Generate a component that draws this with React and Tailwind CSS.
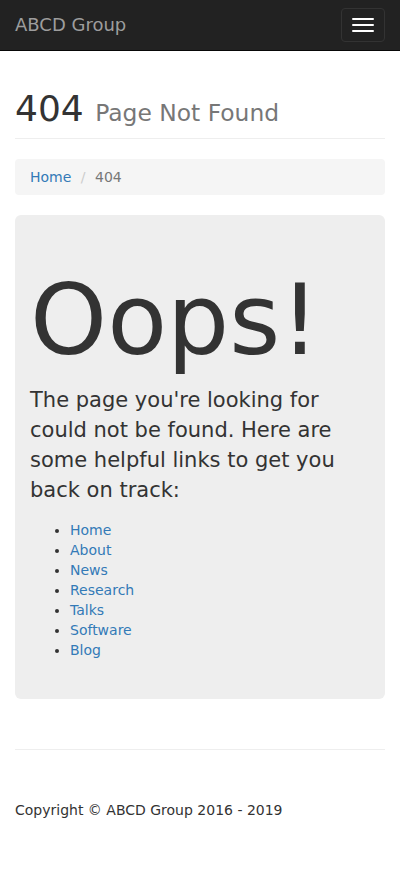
export default function App() {
  const links = ["Home", "About", "News", "Research", "Talks", "Software", "Blog"];

  return (
    <div className="min-h-[881px] bg-white text-[14px] leading-[20px] text-[#333]" style={{ fontFamily: '"DejaVu Sans", sans-serif' }}>
      {/* navbar */}
      <nav className="flex h-[51px] items-start justify-between border-b border-[#080808] bg-[#222]">
        <a className="px-[15px] py-[15px] text-[18px] leading-[20px] text-[#9d9d9d]">ABCD Group</a>
        <button className="mr-[15px] mt-[8px] flex flex-col gap-[4px] rounded-[4px] border border-[#333] px-[10px] py-[9px]">
          <span className="block h-[2px] w-[22px] rounded-[1px] bg-white" />
          <span className="block h-[2px] w-[22px] rounded-[1px] bg-white" />
          <span className="block h-[2px] w-[22px] rounded-[1px] bg-white" />
        </button>
      </nav>

      <div className="px-[15px]">
        <h1 className="mt-[38px] mb-[20px] border-b border-[#eee] pb-[9px] text-[36px] leading-[1.1] font-normal">
          404 <small className="text-[23.4px] text-[#777]">Page Not Found</small>
        </h1>

        <ol className="mb-[20px] flex rounded-[4px] bg-[#f5f5f5] px-[15px] py-[8px]">
          <li><a className="text-[#337ab7]">Home</a>&nbsp;</li>
          <li className="text-[#777]">
            <span className="px-[5px] text-[#ccc]">/&nbsp;</span>404
          </li>
        </ol>

        <div className="mb-[50px] rounded-[6px] bg-[#eee] px-[15px] pt-[30px] pb-[29px]">
          <h1 className="mt-[22px] mb-[11px] text-[98px] leading-[1.1] font-normal">Oops!</h1>
          <p className="mb-[15px] text-[21px] leading-[30px]">
            The page you're looking for could not be found. Here are some helpful links to get you back on track:
          </p>
          <ul className="mb-[10px] list-disc pl-[40px]">
            {links.map((l) => (
              <li key={l}>
                <a className="text-[#337ab7]">{l}</a>
              </li>
            ))}
          </ul>
        </div>

        <hr className="mb-[20px] border-t border-[#eee]" />

        <footer className="pt-[30px]">
          <p>Copyright © ABCD Group 2016 - 2019</p>
        </footer>
      </div>
    </div>
  );
}
